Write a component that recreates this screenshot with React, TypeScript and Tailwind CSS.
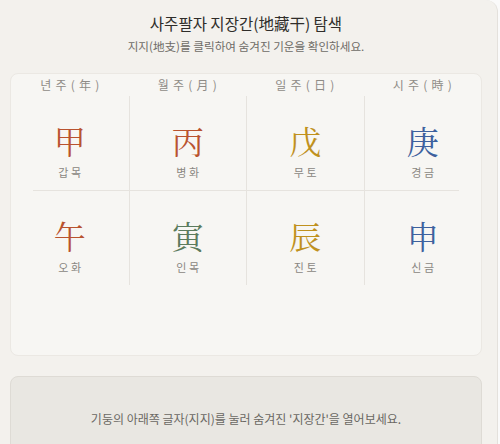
import React from "react";

const KR = { fontFamily: '"Noto Sans CJK KR", "Noto Sans", sans-serif' };
const HAN = { fontFamily: '"Noto Serif CJK KR", "Noto Serif CJK SC", "Noto Sans CJK KR", serif' };

type Cell = { ch: string; label: string; color: string };

const headers = ["년주(年)", "월주(月)", "일주(日)", "시주(時)"];
const stems: Cell[] = [
  { ch: "甲", label: "갑목", color: "text-[#b9532f]" },
  { ch: "丙", label: "병화", color: "text-[#b9532f]" },
  { ch: "戊", label: "무토", color: "text-[#c0911e]" },
  { ch: "庚", label: "경금", color: "text-[#3d619e]" },
];
const branches: Cell[] = [
  { ch: "午", label: "오화", color: "text-[#b9532f]" },
  { ch: "寅", label: "인목", color: "text-[#5b7b5d]" },
  { ch: "辰", label: "진토", color: "text-[#c0911e]" },
  { ch: "申", label: "신금", color: "text-[#3d619e]" },
];

function Row({ cells }: { cells: Cell[] }) {
  return (
    <div className="grid grid-cols-4">
      {cells.map((c, i) => (
        <div
          key={c.ch}
          className={`flex h-[94px] flex-col items-center pt-[25px] ${i > 0 ? "border-l border-[#e6e3de]" : ""}`}
        >
          <div className={`text-[32px] leading-[38px] ${c.color}`} style={HAN}>
            {c.ch}
          </div>
          <div className="mt-[5px] pl-[0.25em] text-[11px] leading-[16px] tracking-[0.25em] text-[#8a8782]" style={KR}>
            {c.label}
          </div>
        </div>
      ))}
    </div>
  );
}

export default function App() {
  return (
    <div className="min-h-[444px] w-[500px] bg-[#fafafa]">
      <div className="min-h-[444px] w-[498px] rounded-tr-xl border-r border-[#e4e1dc] bg-[#f3f1ed] pl-[10px] pr-[15px]" style={KR}>
        <div className="pt-[13px] text-center text-[15.5px] font-normal leading-[21px] text-[#2f2d2a]">
          사주팔자 지장간(地藏干) 탐색
        </div>
        <div className="mt-[4px] text-center text-[11.6px] leading-[16px] text-[#6e6b66]">
          지지(地支)를 클릭하여 숨겨진 기운을 확인하세요.
        </div>
        <div className="mt-[19px] h-[283px] rounded-lg border border-[#ebe8e3] bg-[#f7f6f3]">
          <div className="grid h-[22px] grid-cols-4 items-center">
            {headers.map((h) => (
              <div key={h} className="pl-[0.35em] text-center text-[12px] leading-[16px] tracking-[0.35em] text-[#8f8c87]">
                {h}
              </div>
            ))}
          </div>
          <Row cells={stems} />
          <div className="mx-[22px] h-px bg-[#e6e3de]" />
          <Row cells={branches} />
        </div>
        <div className="mt-[20px] flex h-[80px] items-start justify-center rounded-lg border border-[#dedbd5] bg-[#e9e7e2] pt-[34px]">
          <span className="text-[12px] leading-[16px] text-[#6a6762]">
            기둥의 아래쪽 글자(지지)를 눌러 숨겨진 '지장간'을 열어보세요.
          </span>
        </div>
      </div>
    </div>
  );
}
